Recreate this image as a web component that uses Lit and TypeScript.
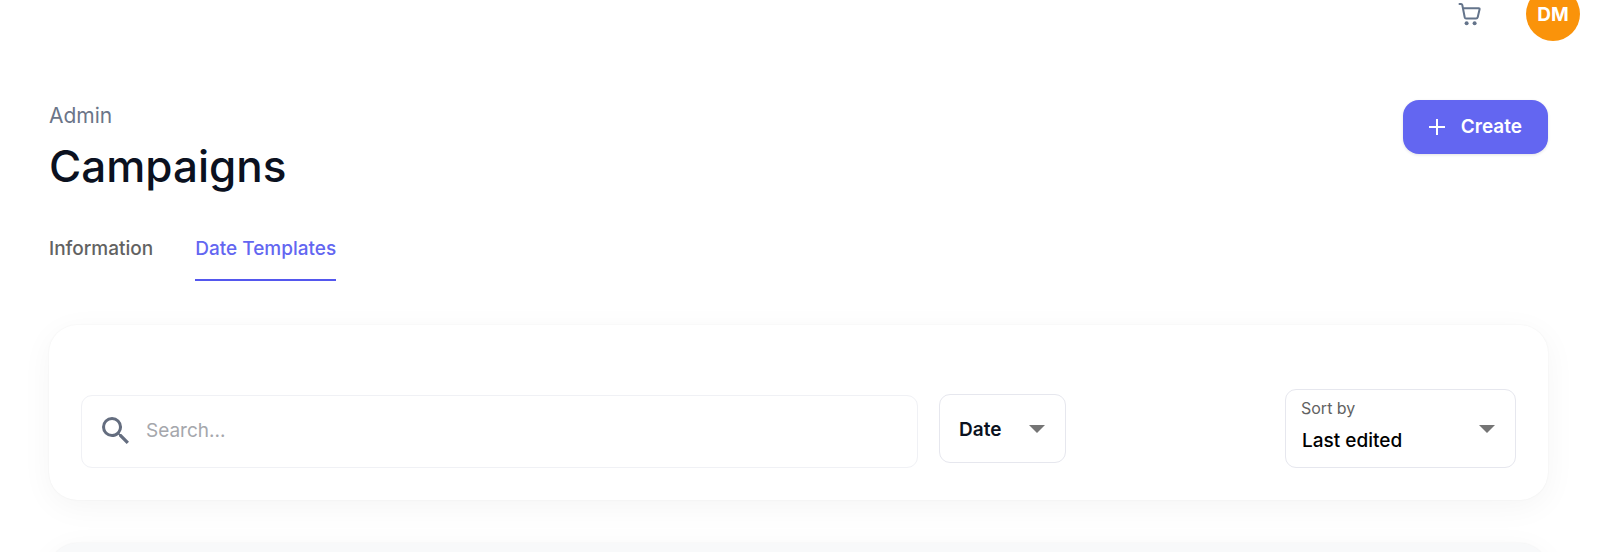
import { LitElement, html, css } from "lit";
import { customElement, state } from "lit/decorators.js";

const caret = html`<svg class="caret" viewBox="0 0 16 8" aria-hidden="true">
  <path d="M0 0h16L8 8z" fill="currentColor" />
</svg>`;

@customElement("app-root")
export class AppRoot extends LitElement {
  static styles = css`
    :host {
      display: block;
      height: 100vh;
      overflow: hidden;
      background: #fff;
      color: #0b1120;
      font-family: Inter, "Liberation Sans", sans-serif;
      font-size: 19px;
      line-height: 28px;
    }
    * {
      box-sizing: border-box;
    }
    button,
    input,
    select {
      font: inherit;
      color: inherit;
      margin: 0;
    }
    .topbar {
      display: flex;
      justify-content: flex-end;
      align-items: flex-end;
      height: 41px;
      padding-right: 20px;
      gap: 33px;
      overflow: hidden;
    }
    .cart {
      display: grid;
      place-items: center;
      width: 46px;
      height: 54px;
      padding: 0;
      border: 0;
      background: none;
      color: #64748b;
    }
    .cart svg {
      width: 24px;
      height: 24px;
    }
    .avatar {
      flex: none;
      width: 54px;
      height: 54px;
      padding: 2px 0 0;
      border: 0;
      border-radius: 50%;
      background: #fa930a;
      color: #fff;
      font-weight: 700;
    }
    main {
      padding: 59px 52px 0 49px;
    }
    .heading {
      display: flex;
      justify-content: space-between;
      align-items: flex-start;
    }
    .crumb {
      margin: 0;
      color: #6b7588;
      font-size: 21px;
      line-height: 32px;
    }
    h1 {
      margin: 0;
      font-size: 44px;
      font-weight: 500;
      line-height: 68px;
    }
    .create {
      display: flex;
      align-items: center;
      gap: 16px;
      height: 54px;
      padding: 0 26px;
      border: 0;
      border-radius: 16px;
      background: #6366f1;
      box-shadow: 0 1px 3px rgba(15, 23, 42, 0.12);
      color: #fff;
      font-weight: 600;
    }
    .create svg {
      width: 16px;
      height: 16px;
    }
    .tabs {
      display: flex;
      gap: 42px;
      margin-top: 18px;
    }
    .tab {
      height: 63px;
      padding: 17px 0 16px;
      border-bottom: 2px solid transparent;
      color: #626262;
      font-weight: 500;
      text-decoration: none;
    }
    .tab.active {
      border-color: #5457ee;
      color: #6366f1;
    }
    .card {
      border-radius: 28px;
      background: #fff;
      box-shadow: 0 7px 32px rgba(0, 0, 0, 0.045), 0 0 2px rgba(0, 0, 0, 0.06);
    }
    .filters {
      display: flex;
      align-items: center;
      margin-top: 44px;
      padding: 64px 32px 32px;
    }
    .search {
      display: flex;
      flex: 1;
      align-items: center;
      align-self: flex-end;
      gap: 17px;
      height: 73px;
      padding: 0 20px 2px;
      border: 1px solid #f0f1f5;
      border-radius: 11px;
    }
    .search svg {
      flex: none;
      width: 27px;
      height: 27px;
      color: #646d7f;
    }
    .search input {
      flex: 1;
      min-width: 0;
      padding: 0;
      border: 0;
      outline: 0;
      background: none;
    }
    .search input::placeholder {
      color: #a5a7ac;
      opacity: 1;
    }
    .picker {
      position: relative;
      flex: none;
    }
    .picker select {
      display: block;
      width: 100%;
      border: 1px solid #e6e7ee;
      border-radius: 11px;
      background: #fff;
      appearance: none;
    }
    .caret {
      position: absolute;
      right: 21px;
      top: 50%;
      width: 16px;
      height: 8px;
      margin-top: -4px;
      color: #757575;
      pointer-events: none;
    }
    .date {
      width: 127px;
      margin-left: 21px;
    }
    .date select {
      height: 69px;
      padding: 2px 48px 0 19px;
      font-weight: 600;
    }
    .sort {
      width: 231px;
      margin-left: 219px;
    }
    .sort label {
      position: absolute;
      left: 16px;
      top: 7px;
      color: #626262;
      font-size: 16px;
      line-height: 24px;
      pointer-events: none;
    }
    .sort select {
      height: 79px;
      padding: 24px 48px 0 16px;
      color: #000;
      font-weight: 500;
    }
    .results {
      height: 96px;
      margin-top: 43px;
      background: #f8f9fa;
    }
  `;

  @state() private tab = "Date Templates";

  private select(event: Event, name: string) {
    event.preventDefault();
    this.tab = name;
  }

  render() {
    return html`
      <header class="topbar">
        <button class="cart" aria-label="Cart">
          <svg viewBox="0 0 24 24" fill="none" stroke="currentColor" stroke-width="2" stroke-linecap="round" stroke-linejoin="round">
            <path d="M1.5 2h1.6c.7 0 1 .3 1.2 1L6.700 15.200c.2.9.6 1.200 1.400 1.200h10c.9 0 1.400-.4 1.600-1.200L21.600 7.300c.1-.7-.2-1.100-.9-1.100H5" />
            <circle cx="8.6" cy="21.200" r="2" fill="currentColor" stroke="none" />
            <circle cx="16.600" cy="21.200" r="2" fill="currentColor" stroke="none" />
          </svg>
        </button>
        <button class="avatar">DM</button>
      </header>
      <main>
        <div class="heading">
          <div>
            <p class="crumb">Admin</p>
            <h1>Campaigns</h1>
          </div>
          <button class="create">
            <svg viewBox="0 0 16 16" stroke="currentColor" stroke-width="2" aria-hidden="true">
              <path d="M8 0v16M0 8h16" />
            </svg>
            Create
          </button>
        </div>
        <nav class="tabs">
          ${["Information", "Date Templates"].map(
            (name) => html`<a
              href="#"
              class="tab ${this.tab === name ? "active" : ""}"
              @click=${(e: Event) => this.select(e, name)}
              >${name}</a
            >`
          )}
        </nav>
        <section class="card filters">
          <div class="search">
            <svg viewBox="3 3 17.5 17.5" fill="currentColor" aria-hidden="true">
              <path
                d="M15.5 14h-.79l-.28-.27A6.471 6.471 0 0 0 16 9.5 6.5 6.5 0 1 0 9.5 16c1.61 0 3.09-.59 4.23-1.57l.27.28v.79l5 4.99L20.49 19l-4.99-5zm-6 0C7.01 14 5 11.99 5 9.5S7.01 5 9.5 5 14 7.01 14 9.5 11.99 14 9.5 14z"
              />
            </svg>
            <input type="text" placeholder="Search..." aria-label="Search" />
          </div>
          <div class="picker date">
            <select aria-label="Date">
              <option>Date</option>
            </select>
            ${caret}
          </div>
          <div class="picker sort">
            <label for="sort">Sort by</label>
            <select id="sort">
              <option>Last edited</option>
            </select>
            ${caret}
          </div>
        </section>
        <section class="card results"></section>
      </main>
    `;
  }
}
